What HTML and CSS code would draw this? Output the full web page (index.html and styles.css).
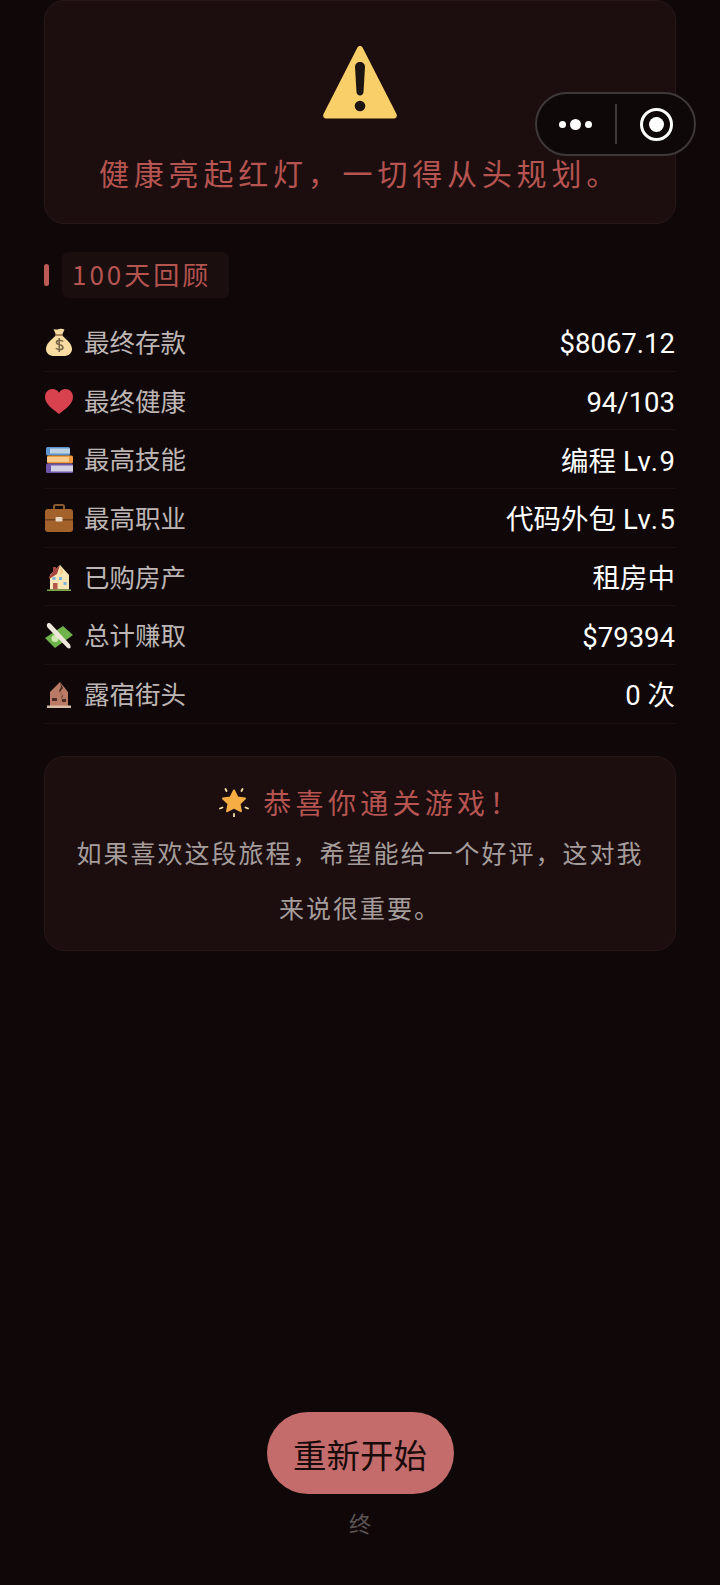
FILE: index.html
```html
<!DOCTYPE html>
<html lang="zh-CN">
<head>
    <meta charset="UTF-8">
    <meta name="viewport" content="width=device-width, initial-scale=1.0">
    <title>结局</title>
    <link rel="stylesheet" href="styles.css">
</head>
<body>
    <div class="capsule">
        <div class="capsule-more"><span class="dot"></span><span class="dot big"></span><span class="dot"></span></div>
        <div class="capsule-line"></div>
        <div class="capsule-close"><span class="ring"><span class="ring-core"></span></span></div>
    </div>

    <div class="page">
        <div class="card ending">
            <svg class="warn" viewBox="0 0 74 73">
                <path d="M37 0c1.200 0 2.100.6 2.700 1.800L73.500 68c.9 2-.3 4.500-2.500 4.500H3c-2.200 0-3.400-2.500-2.500-4.500L34.300 1.800C34.900.6 35.800 0 37 0z" fill="#f8cf68"/>
                <path d="M32 21c0-3 2.200-5 5-5s5 2 5 5l-1.500 25c-.2 2-1.600 3.500-3.500 3.500s-3.300-1.500-3.500-3.500z" fill="#1d1512"/>
                <circle cx="37" cy="60" r="5.300" fill="#1d1512"/>
            </svg>
            <p class="ending-text">健康亮起红灯，一切得从头规划。</p>
        </div>

        <div class="section-head">
            <span class="section-bar"></span>
            <span class="section-title">100天回顾</span>
        </div>

        <div class="stats">
            <div class="stat">
                <div class="stat-label">
                    <svg class="stat-icon" viewBox="0 0 30 30">
                        <path d="M9.500 2c2 1 3.500.5 5.500 0s3.500-.5 5.500.5L18 8h-6z" fill="#f5d9a0"/>
                        <path d="M12 8h6c2 3 9.500 7 10 13.500.3 5-4 7.500-8 7.500H10c-4 0-8.300-2.500-8-7.500C2.500 15 10 11 12 8z" fill="#f8dca2"/>
                        <rect x="11.500" y="7" width="7" height="2" fill="#a9895a"/>
                        <path d="M19 14.500c-1-1.500-6.500-2-6.500 1 0 3 6.500 1.500 6.500 5 0 3-6 2.500-7 .5M15.200 11v14" fill="none" stroke="#78664a" stroke-width="1.600"/>
                    </svg>
                    <span>最终存款</span>
                </div>
                <span class="stat-value">$8067.12</span>
            </div>
            <div class="stat">
                <div class="stat-label">
                    <svg class="stat-icon" viewBox="0 0 30 30">
                        <path d="M15 28C9 23 1 18.500 1 11 1 6 4.500 3 8.500 3c2.800 0 5 1.300 6.500 3.700C16.500 4.300 18.700 3 21.500 3c4 0 7.500 3 7.500 8 0 7.500-8 12-14 17z" fill="#d8424f"/>
                    </svg>
                    <span>最终健康</span>
                </div>
                <span class="stat-value">94/103</span>
            </div>
            <div class="stat">
                <div class="stat-label">
                    <svg class="stat-icon" viewBox="0 0 30 30">
                        <rect x="2" y="2" width="24" height="8.500" rx="1.500" fill="#5d95cf"/>
                        <rect x="6" y="3.500" width="20" height="5" fill="#bcd3e6"/>
                        <rect x="3" y="10.500" width="26" height="8" rx="1.500" fill="#ef9b3d"/>
                        <rect x="3" y="12" width="22" height="5" fill="#f6c98c"/>
                        <rect x="2" y="18.500" width="27" height="9.500" rx="1.500" fill="#6f55a8"/>
                        <rect x="7" y="20.500" width="22" height="6" fill="#d3d0e4"/>
                    </svg>
                    <span>最高技能</span>
                </div>
                <span class="stat-value">编程 <span class="stat-level">Lv.9</span></span>
            </div>
            <div class="stat">
                <div class="stat-label">
                    <svg class="stat-icon" viewBox="0 0 30 30">
                        <path d="M10 7V3.500C10 2.500 10.700 2 11.500 2h7c.8 0 1.500.5 1.500 1.500V7" fill="none" stroke="#8c5a2f" stroke-width="2"/>
                        <rect x="1" y="6" width="28" height="23" rx="3" fill="#a3622c"/>
                        <rect x="1" y="16" width="28" height="1.500" fill="#6e3f1c"/>
                        <rect x="11.500" y="14" width="7" height="4.500" rx="1" fill="#e9d6c0"/>
                    </svg>
                    <span>最高职业</span>
                </div>
                <span class="stat-value">代码外包 <span class="stat-level">Lv.5</span></span>
            </div>
            <div class="stat">
                <div class="stat-label">
                    <svg class="stat-icon" viewBox="0 0 30 30">
                        <path d="M6 27.500V13L16 3l9 10v14.500z" fill="#f8e6b4"/>
                        <path d="M5 15l4-5V5h3v2l4-4-3 9-8 5z" fill="#a8453f"/>
                        <path d="M16 3l3.500 7-3.500 4z" fill="#f4d08c"/>
                        <rect x="9" y="21" width="4.500" height="6.500" fill="#b4574b"/>
                        <rect x="8.500" y="15" width="3" height="3" fill="#7fb2da"/>
                        <rect x="15" y="15" width="3" height="3" fill="#7fb2da"/>
                        <rect x="19.500" y="20" width="3" height="3" fill="#7fb2da"/>
                        <rect x="3" y="27.500" width="24" height="1.500" fill="#7da84a"/>
                    </svg>
                    <span>已购房产</span>
                </div>
                <span class="stat-value">租房中</span>
            </div>
            <div class="stat">
                <div class="stat-label">
                    <svg class="stat-icon" viewBox="0 0 30 30">
                        <path d="M1 17 19 5l10 9-18 13z" fill="#6fb34c"/>
                        <circle cx="11" cy="17.500" r="3.500" fill="#cfe8b0"/>
                        <path d="M3.500 2.500c2-1 3 0 4 1l18.500 20c1 2 1 4-1 4-1 0-2-1-3-2L4 7c-1.500-1.500-1.500-3.500-.5-4.500z" fill="#ede6da"/>
                    </svg>
                    <span>总计赚取</span>
                </div>
                <span class="stat-value">$79394</span>
            </div>
            <div class="stat">
                <div class="stat-label">
                    <svg class="stat-icon" viewBox="0 0 30 30">
                        <path d="M6 27V13L16 3l8 10v14z" fill="#b97a66"/>
                        <path d="M16 3l3 6-3 4 3 4-2 4 1-5-3-4 2-4z" fill="#4d2a24"/>
                        <rect x="8" y="19" width="5" height="3" fill="#4d2a24"/>
                        <rect x="18" y="20" width="4" height="3" fill="#4d2a24"/>
                        <rect x="3" y="26.500" width="24" height="2.500" fill="#d8bba6"/>
                    </svg>
                    <span>露宿街头</span>
                </div>
                <span class="stat-value">0 次</span>
            </div>
        </div>

        <div class="card thanks">
            <div class="thanks-title">
                <svg class="star" viewBox="0 0 30 30">
                    <path d="M15 3.500l3.500 7 7.500 1-5.500 5.200 1.400 7.500-6.900-3.700-6.900 3.700 1.400-7.500L4 11.500l7.500-1z" fill="#f6ad43" stroke="#f6ad43" stroke-width="2" stroke-linejoin="round"/>
                    <path d="M15 27v2.500M6.500 2l1 2M23.500 2l-1 2M1 21.500l2.500-1M29 21.500l-2.500-1" stroke="#f9e3a6" stroke-width="1.800" stroke-linecap="round"/>
                </svg>
                <span>恭喜你通关游戏！</span>
            </div>
            <p class="thanks-text">如果喜欢这段旅程，希望能给一个好评，这对我来说很重要。</p>
        </div>

        <div class="footer">
            <button class="restart" type="button">重新开始</button>
            <div class="end-mark">终</div>
        </div>
    </div>
</body>
</html>
```

FILE: styles.css
```css
* {
    box-sizing: border-box;
}
html, body {
    height: 100%;
}
body {
    margin: 0;
    overflow: hidden;
    background-color: #0f0708;
    font-family: "Noto Sans CJK SC", "Noto Sans", sans-serif;
}
.page {
    display: flex;
    flex-direction: column;
    height: 100%;
    padding: 0 44px;
}
.card {
    background: #1c0e0f;
    border: 1.5px solid #281718;
    border-radius: 20px;
}
.ending {
    display: flex;
    flex-direction: column;
    align-items: center;
    height: 224px;
    padding-top: 45px;
}
.warn {
    width: 74px;
    height: 73px;
}
.ending-text {
    margin: 29px 0 0;
    font-size: 30px;
    line-height: 48px;
    letter-spacing: 4.800px;
    color: #b55450;
}
.section-head {
    display: flex;
    align-items: center;
    margin-top: 28px;
    height: 46px;
}
.section-bar {
    width: 5px;
    height: 22px;
    margin-right: 13px;
    border-radius: 3px;
    background: #bd5a56;
}
.section-title {
    height: 46px;
    padding: 0 18px 0 10px;
    border-radius: 6px;
    background: #1a0e0f;
    font-size: 26px;
    line-height: 44px;
    letter-spacing: 3px;
    color: #b55450;
}
.stats {
    margin-top: 15px;
}
.stat {
    display: flex;
    justify-content: space-between;
    align-items: center;
    height: 58.700px;
    border-bottom: 1px solid #1b1011;
}
.stat-label {
    display: flex;
    align-items: center;
    font-size: 25.500px;
    color: #bdb6b4;
}
.stat-label span {
    line-height: 34px;
    padding-bottom: 2px;
}
.stat-icon {
    width: 30px;
    height: 30px;
    margin: 1px 10px 0 0;
}
.stat-value {
    padding: 5px 1px 0 0;
    font-family: "Roboto", "Noto Sans CJK SC", sans-serif;
    font-size: 27.500px;
    line-height: 36px;
    white-space: nowrap;
    color: #fff;
}
.stat-level {
    margin-right: -1.500px;
    letter-spacing: 1.500px;
}
.thanks {
    margin-top: 32px;
    height: 195px;
    padding-top: 22px;
    text-align: center;
}
.thanks-title {
    display: flex;
    justify-content: center;
    align-items: center;
    height: 46px;
    padding-left: 21px;
    font-size: 28px;
    letter-spacing: 4.300px;
    color: #b55450;
}
.star {
    width: 30px;
    height: 30px;
    margin-right: 14px;
}
.thanks-text {
    margin: 0;
    padding: 0 28px;
    font-size: 25px;
    line-height: 55px;
    letter-spacing: 2px;
    color: #a59d9b;
}
.footer {
    margin-top: auto;
    padding-bottom: 47px;
    text-align: center;
}
.restart {
    display: block;
    width: 187px;
    height: 82px;
    margin: 0 auto;
    border: none;
    border-radius: 41px;
    background-color: #c46c6c;
    font-family: inherit;
    font-size: 33.500px;
    color: #1a0b0b;
}
.end-mark {
    margin-top: 12px;
    font-size: 22px;
    line-height: 32px;
    color: #5c5452;
}
/* wechat capsule, floats over the page */
.capsule {
    position: absolute;
    top: 92px;
    left: 535px;
    display: flex;
    align-items: center;
    width: 161px;
    height: 64px;
    border: 2px solid #3e3938;
    border-radius: 32px;
    background: #0e0808;
}
.capsule-more {
    display: flex;
    justify-content: center;
    align-items: center;
    gap: 4px;
    width: 76px;
}
.dot {
    width: 7px;
    height: 7px;
    border-radius: 50%;
    background: #fff;
}
.dot.big {
    width: 11px;
    height: 11px;
}
.capsule-line {
    width: 2px;
    height: 40px;
    margin-left: 2px;
    background: #3e3938;
}
.capsule-close {
    flex: 1;
    display: flex;
    justify-content: center;
    padding-left: 2px;
}
.ring {
    display: flex;
    justify-content: center;
    align-items: center;
    width: 33px;
    height: 33px;
    border: 3.500px solid #fff;
    border-radius: 50%;
}
.ring-core {
    width: 15px;
    height: 15px;
    border-radius: 50%;
    background: #fff;
}
```
